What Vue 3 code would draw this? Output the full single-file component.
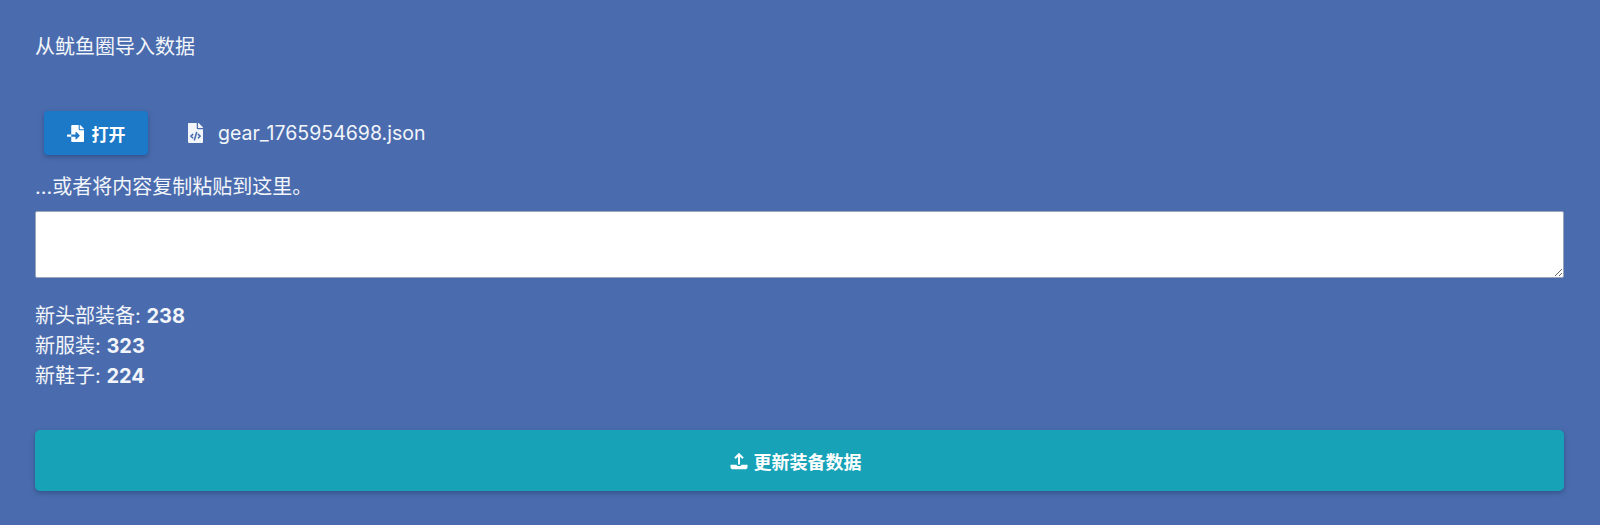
<template>
  <div class="page">
    <h3 class="title">从鱿鱼圈导入数据</h3>

    <div class="file-row">
      <button class="open-btn" type="button">
        <svg class="open-icon" viewBox="0 0 512 512" fill="currentColor">
          <path d="M16 288c-8.800 0-16 7.200-16 16v32c0 8.800 7.200 16 16 16h112v-64H16zm336-152V0H152c-13.300 0-24 10.700-24 24v264h127.990v-65.180c0-14.280 17.290-21.410 27.360-11.270l95.700 96.430c6.600 6.650 6.600 17.390 0 24.040l-95.700 96.420c-10.060 10.140-27.360 3.010-27.360-11.270V352H128v136c0 13.300 10.700 24 24 24h336c13.300 0 24-10.700 24-24V160H376c-13.200 0-24-10.800-24-24zm153-31L407.100 7c-4.500-4.500-10.600-7-17-7H384v128h128v-6.100c0-6.300-2.500-12.400-7-16.900z" />
        </svg>
        打开
      </button>
      <span class="file-name">
        <svg class="file-icon" viewBox="0 0 384 512" fill="currentColor">
          <path d="M384 121.941V128H256V0h6.059c6.365 0 12.470 2.529 16.971 7.029l97.941 97.941A24.005 24.005 0 0 1 384 121.941zM248 160c-13.200 0-24-10.800-24-24V0H24C10.745 0 0 10.745 0 24v464c0 13.255 10.745 24 24 24h336c13.255 0 24-10.745 24-24V160H248zM123.206 400.505a5.400 5.400 0 0 1-7.633.246l-64.866-60.812a5.400 5.400 0 0 1 0-7.879l64.866-60.812a5.400 5.400 0 0 1 7.633.246l19.579 20.885a5.400 5.400 0 0 1-.372 7.747L101.650 336l40.763 35.874a5.400 5.400 0 0 1 .372 7.747l-19.579 20.884zm51.295 50.479l-27.453-7.970a5.402 5.402 0 0 1-3.681-6.692l61.440-211.626a5.402 5.402 0 0 1 6.692-3.681l27.452 7.970a5.400 5.400 0 0 1 3.680 6.692l-61.440 211.626a5.397 5.397 0 0 1-6.690 3.681zm160.792-111.045l-64.866 60.812a5.400 5.400 0 0 1-7.633-.246l-19.580-20.885a5.400 5.400 0 0 1 .372-7.747L284.350 336l-40.763-35.874a5.400 5.400 0 0 1-.372-7.747l19.580-20.885a5.400 5.400 0 0 1 7.633-.246l64.866 60.812a5.400 5.400 0 0 1-.001 7.879z" />
        </svg>
        gear_1765954698.json
      </span>
    </div>

    <label class="paste-label">...或者将内容复制粘贴到这里。</label>
    <textarea class="paste-box"></textarea>

    <div class="stats">
      <div v-for="row in stats" :key="row.label">{{ row.label }}: <strong>{{ row.count }}</strong></div>
    </div>

    <button class="update-btn" type="button">
      <svg class="update-icon" viewBox="0 0 18 18">
        <path d="M9 12.500V2.500M5 6.200 9 2.200l4 4" fill="none" stroke="currentColor" stroke-width="2" />
        <path d="M0.500 12.800h6c.3 1 1.200 1.400 2.500 1.400s2.200-.4 2.500-1.400h6v2.500c0 1.100-.8 1.900-1.900 1.900H2.400c-1.100 0-1.900-.8-1.900-1.900z" fill="currentColor" />
      </svg>
      更新装备数据
    </button>
  </div>
</template>

<script setup>
const stats = [
  { label: '新头部装备', count: 238 },
  { label: '新服装', count: 323 },
  { label: '新鞋子', count: 224 }
]
</script>

<style>
html,
body {
  background: #4a6cae;
}
</style>

<style scoped>
.page {
  box-sizing: border-box;
  height: 525px;
  padding: 35px 36px 34px 35px;
  background: #4a6cae;
  color: #f2f5fa;
  font-family: Inter, "Noto Sans CJK SC", sans-serif;
  font-size: 20px;
  overflow: hidden;
}

.title {
  margin: 0;
  height: 24px;
  line-height: 24px;
  font-size: 20px;
  font-weight: 400;
}

.file-row {
  display: flex;
  align-items: center;
  margin: 52px 0 0 9px;
}

.open-btn {
  display: flex;
  align-items: center;
  justify-content: center;
  gap: 8px;
  width: 104px;
  height: 44px;
  padding: 0;
  border: none;
  border-radius: 4px;
  background: #1b79c8;
  color: #fff;
  font: inherit;
  font-size: 17px;
  font-weight: 700;
  box-shadow: 0 2px 5px rgba(20, 40, 80, 0.4);
}

.open-icon {
  width: 17px;
  height: 17px;
}

.file-name {
  display: flex;
  align-items: center;
  margin-left: 40px;
  font-size: 19.500px;
}

.file-icon {
  width: 15px;
  height: 20px;
  margin-right: 15px;
}

.paste-label {
  display: block;
  margin-top: 20px;
  height: 24px;
  line-height: 24px;
}

.paste-box {
  display: block;
  box-sizing: border-box;
  width: 100%;
  height: 67px;
  margin-top: 12px;
  border: 1px solid #9aa5b8;
  border-radius: 2px;
  background: #fff;
  outline: none;
}

.stats {
  margin-top: 23px;
  line-height: 30px;
}

.stats strong {
  font-weight: 700;
}

.update-btn {
  display: flex;
  align-items: center;
  justify-content: center;
  gap: 6px;
  width: 100%;
  height: 61px;
  margin-top: 39px;
  padding: 0 8px 0 0;
  border: none;
  border-radius: 5px;
  background: #17a2b8;
  color: #fff;
  font: inherit;
  font-size: 18px;
  font-weight: 700;
  box-shadow: 0 2px 5px rgba(20, 40, 80, 0.4);
}

.update-icon {
  width: 18px;
  height: 18px;
}
</style>
